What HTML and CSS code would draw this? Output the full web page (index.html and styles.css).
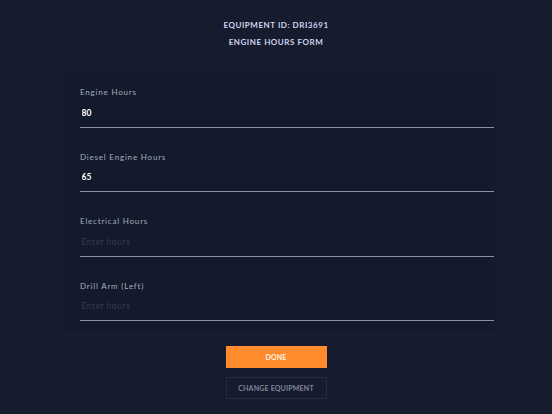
FILE: index.html
```html
<!DOCTYPE html>
<html lang="en">
<head>
    <meta charset="UTF-8">
    <meta name="viewport" content="width=device-width, initial-scale=1.0">
    <title>Engine Hours Form</title>
    <link rel="stylesheet" href="styles.css">
</head>
<body>

<div class="page">
    <div class="header">
        <div class="title">EQUIPMENT ID: DRI3691</div>
        <div class="title">ENGINE HOURS FORM</div>
    </div>

    <div class="panel">
        <div class="field">
            <label>Engine Hours</label>
            <input type="text" value="80" placeholder="Enter hours">
        </div>
        <div class="field">
            <label>Diesel Engine Hours</label>
            <input type="text" value="65" placeholder="Enter hours">
        </div>
        <div class="field">
            <label>Electrical Hours</label>
            <input type="text" placeholder="Enter hours">
        </div>
        <div class="field">
            <label>Drill Arm (Left)</label>
            <input type="text" placeholder="Enter hours">
        </div>
    </div>

    <div class="actions">
        <button class="btn btn-primary">DONE</button>
        <button class="btn btn-outline">CHANGE EQUIPMENT</button>
    </div>
</div>

</body>
</html>
```

FILE: styles.css
```css
html, body { margin: 0; height: 100%; }
body { font-family: Lato, 'Open Sans', sans-serif; background: #161b2e; color: #c9d2e6; }

.page { width: 552px; height: 414px; box-sizing: border-box; padding-top: 20px; }

/* Header */
.header { display: flex; flex-direction: column; align-items: center; gap: 6px; }
.title { font-size: 8px; font-weight: bold; letter-spacing: 0.55px; color: #cdd7ef; line-height: 11px; }

/* Form panel */
.panel { display: flex; flex-direction: column; gap: 24px; margin: 22px 56px 0 64px; padding: 17px 2px 10px 16px; background: #121a2b; }
.field { display: flex; flex-direction: column; }

label { font-size: 8px; letter-spacing: 0.8px; color: #a7adbd; line-height: 10px; }
input { background: transparent; border: none; border-bottom: 1.5px solid #8b91a3; color: #ffffff;
        font-family: inherit; font-size: 8.5px; font-weight: bold; line-height: 12px; height: 30.5px; box-sizing: border-box;
        padding: 10px 1.5px 8.5px; margin: 0; outline: none; }
input::placeholder { color: #363d4e; font-weight: normal; letter-spacing: 0.5px; }

/* Buttons */
.actions { display: flex; flex-direction: column; align-items: center; gap: 9px; margin-top: 15px; }
.btn { width: 101px; height: 22px; font-family: inherit; font-size: 7px; font-weight: bold; letter-spacing: 0.2px; cursor: pointer; }
.btn-primary { background: #ff8b2c; border: none; color: #fff1e4; }
.btn-outline { background: transparent; border: 1px solid #262c38; color: #7f879a; }
```
